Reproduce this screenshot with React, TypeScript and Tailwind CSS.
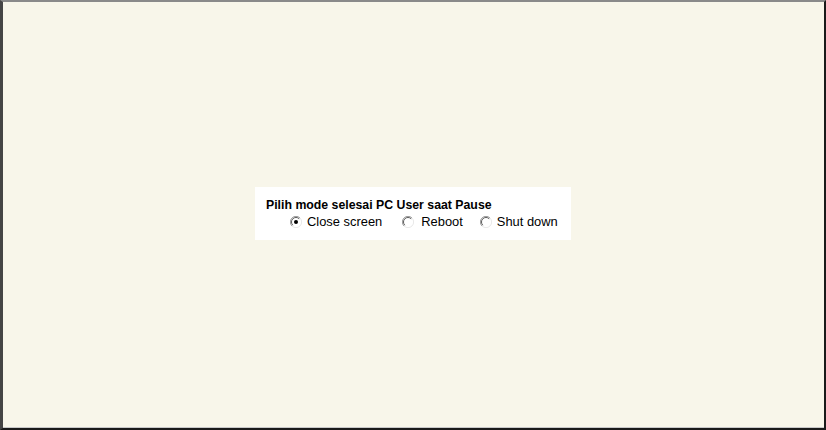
import React from "react";

function Radio({ checked }: { checked?: boolean }) {
  return (
    <svg width="12" height="12" viewBox="0 0 12 12" className="shrink-0">
      <circle cx="6" cy="6" r="5.5" fill="#ffffff" />
      <path d="M10 2 A5.5 5.5 0 0 0 2 10" fill="none" stroke="#9a9a9a" strokeWidth="1" />
      <path d="M9.2 2.8 A4.5 4.5 0 0 0 2.8 9.2" fill="none" stroke="#5a5a5a" strokeWidth="1" />
      <path d="M2 10 A5.5 5.5 0 0 0 10 2" fill="none" stroke="#e8e8e8" strokeWidth="1" />
      {checked && <circle cx="6" cy="6" r="2" fill="#000000" />}
    </svg>
  );
}

export default function App() {
  return (
    <div className="w-[826px] h-[430px] bg-[#d4d0c8] overflow-hidden">
      <div className="w-full h-full border-t-2 border-l-[3px] border-r-2 border-b-2 border-t-[#8a8a8a] border-l-[#454545] border-r-[#1a1a1a] border-b-[#1a1a1a]">
        <div className="w-full h-full border-b border-b-[#c8c8c8] bg-[#f8f6ea] flex items-center justify-center" style={{ fontFamily: '"Liberation Sans", Arial, sans-serif' }}>
          <div className="bg-white w-[316px] h-[53px] pl-[11px] pt-[11px] mt-[-2px] ml-[-1px] text-black">
            <div className="font-bold text-[12.3px] leading-[14px]">Pilih mode selesai PC User saat Pause</div>
            <div className="flex items-center mt-[2px] pl-[24px] text-[12.9px] leading-[15px]">
              <label className="flex items-center gap-[5px]">
                <Radio checked />
                <span>Close screen</span>
              </label>
              <label className="flex items-center gap-[7px] ml-[20px]">
                <Radio />
                <span>Reboot</span>
              </label>
              <label className="flex items-center gap-[5px] ml-[17px]">
                <Radio />
                <span>Shut down</span>
              </label>
            </div>
          </div>
        </div>
      </div>
    </div>
  );
}
